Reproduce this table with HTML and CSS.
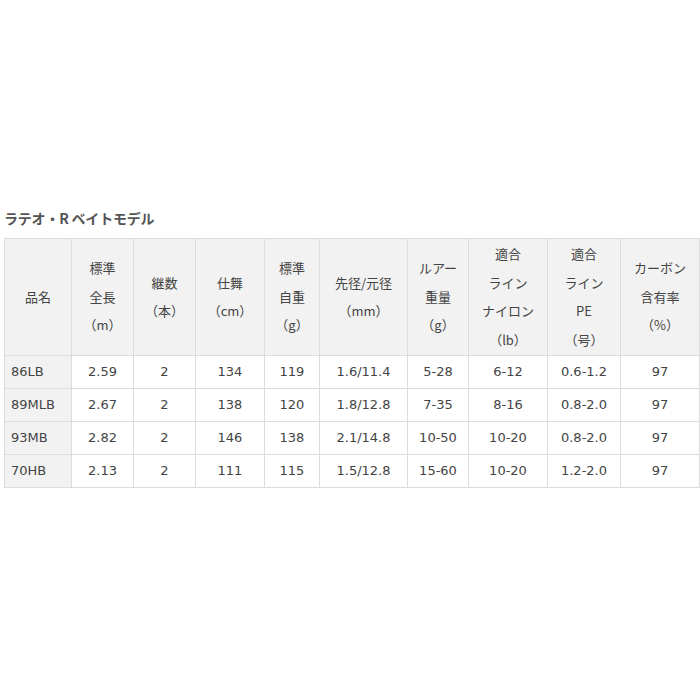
FILE: index.html
```html
<!DOCTYPE html>
<html lang="ja">
<head>
<meta charset="utf-8">
<link rel="stylesheet" href="styles.css">
</head>
<body>
<div class="wrap">
  <h2 class="title">ラテオ・R ベイトモデル</h2>
  <table class="spec">
    <colgroup>
      <col class="c1"><col class="c2"><col class="c3"><col class="c4"><col class="c5">
      <col class="c6"><col class="c7"><col class="c8"><col class="c9"><col class="c10">
    </colgroup>
    <thead>
      <tr>
        <th>品名</th>
        <th>標準<br>全長<br>（m）</th>
        <th>継数<br>（本）</th>
        <th>仕舞<br>（cm）</th>
        <th>標準<br>自重<br>（g）</th>
        <th>先径/元径<br>（mm）</th>
        <th>ルアー<br>重量<br>（g）</th>
        <th>適合<br>ライン<br>ナイロン<br>（lb）</th>
        <th>適合<br>ライン<br>PE<br>（号）</th>
        <th>カーボン<br>含有率<br>（%）</th>
      </tr>
    </thead>
    <tbody>
      <tr><td class="name">86LB</td><td>2.59</td><td>2</td><td>134</td><td>119</td><td>1.6/11.4</td><td>5-28</td><td>6-12</td><td>0.6-1.2</td><td>97</td></tr>
      <tr><td class="name">89MLB</td><td>2.67</td><td>2</td><td>138</td><td>120</td><td>1.8/12.8</td><td>7-35</td><td>8-16</td><td>0.8-2.0</td><td>97</td></tr>
      <tr><td class="name">93MB</td><td>2.82</td><td>2</td><td>146</td><td>138</td><td>2.1/14.8</td><td>10-50</td><td>10-20</td><td>0.8-2.0</td><td>97</td></tr>
      <tr><td class="name">70HB</td><td>2.13</td><td>2</td><td>111</td><td>115</td><td>1.5/12.8</td><td>15-60</td><td>10-20</td><td>1.2-2.0</td><td>97</td></tr>
    </tbody>
  </table>
</div>
</body>
</html>
```

FILE: styles.css
```css
html, body {
  margin: 0;
  padding: 0;
  background: #ffffff;
}
body {
  width: 700px;
  height: 700px;
  font-family: "DejaVu Sans", "Noto Sans CJK JP", sans-serif;
  color: #444444;
}
.wrap {
  padding: 207px 0 0 4px;
}
.title {
  margin: 0 0 9px 0;
  font-family: "Noto Sans CJK JP", sans-serif;
  font-size: 14px;
  font-weight: 700;
  line-height: 22px;
  color: #555555;
  letter-spacing: -0.2px;
}
.spec {
  border-collapse: collapse;
  table-layout: fixed;
  width: 695px;
  font-size: 13px;
}
.c1 { width: 67px; }
.c2 { width: 62px; }
.c3 { width: 62px; }
.c4 { width: 69px; }
.c5 { width: 55px; }
.c6 { width: 88px; }
.c7 { width: 61px; }
.c8 { width: 79px; }
.c9 { width: 73px; }
.c10 { width: 79px; }
.spec th, .spec td {
  border: 1px solid #dcdcdc;
  text-align: center;
  vertical-align: middle;
  padding: 0;
  white-space: nowrap;
}
.spec th {
  background: #f2f2f2;
  font-weight: 400;
  height: 116px;
  line-height: 28.5px;
  font-family: "Noto Sans CJK JP", sans-serif;
  color: #444444;
}
.spec td {
  height: 32px;
  line-height: 32px;
  background: #ffffff;
}
.spec td.name {
  background: #f2f2f2;
  text-align: left;
  padding-left: 6px;
}
```
